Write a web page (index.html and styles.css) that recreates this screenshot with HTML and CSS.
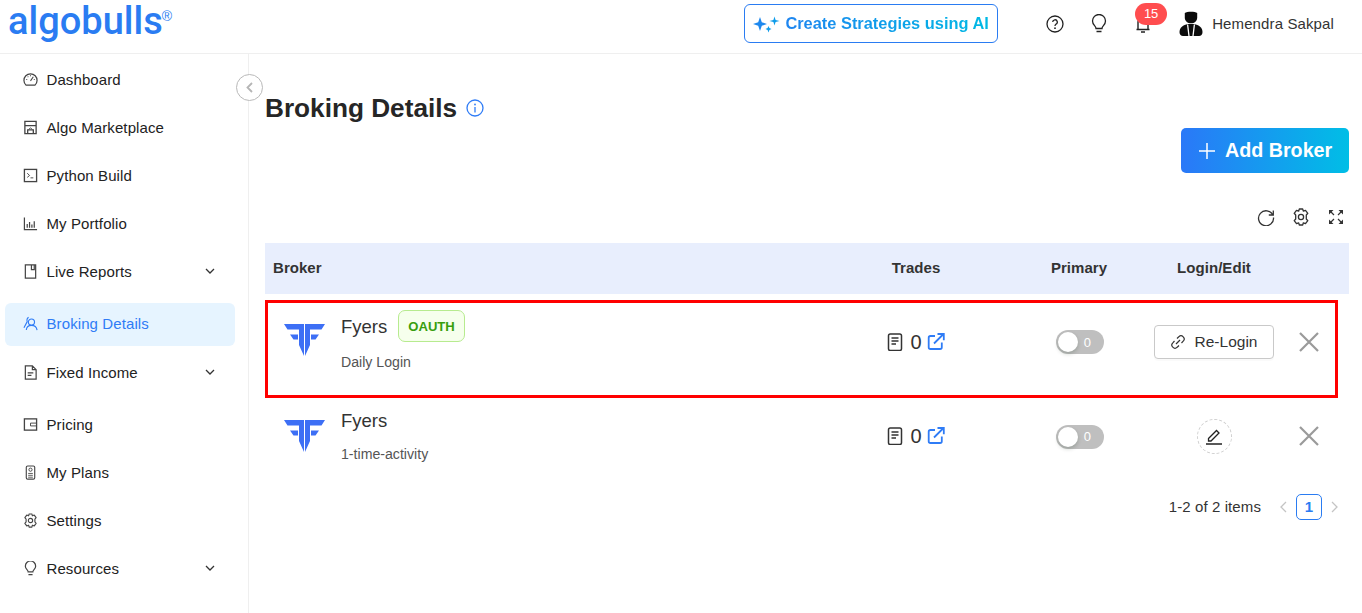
FILE: index.html
```html
<!DOCTYPE html>
<html lang="en">
<head>
<meta charset="utf-8">
<title>Broking Details</title>
<link rel="stylesheet" href="styles.css">
</head>
<body>
<svg class="defs" width="0" height="0" aria-hidden="true">
  <defs>
    <g id="fyers" fill="#3d6ff5">
      <polygon points="0,0 20,0 20,32 15,21 15,5.500 3.500,5.500"/>
      <polygon points="41,0 21,0 21,32 26,21 26,5.500 37.500,5.500"/>
      <polygon points="6,10.500 14,10.500 14,15.500 9.500,15.500"/>
      <polygon points="35,10.500 27,10.500 27,15.500 31.500,15.500"/>
    </g>
    <g id="doc">
      <rect x="1.500" y="1" width="13" height="16.500" rx="1.800" fill="none" stroke="#333" stroke-width="1.500"/>
      <path d="M4.500 5h7M4.500 8h7M4.500 11h4.500" fill="none" stroke="#333" stroke-width="1.300"/>
    </g>
    <g id="ext">
      <path d="M8 3H3.500A1.800 1.800 0 0 0 1.700 4.800V14.200A1.800 1.800 0 0 0 3.500 16H13A1.800 1.800 0 0 0 14.800 14.200V9.500" fill="none" stroke="#2f7cf6" stroke-width="1.800"/>
      <path d="M7 10.500 16.500 1M10.500 1H16.800V7.300" fill="none" stroke="#2f7cf6" stroke-width="1.800"/>
    </g>
    <g id="cross">
      <path d="M1 1 19 19M19 1 1 19" fill="none" stroke="#9a9a9a" stroke-width="2.200"/>
    </g>
  </defs>
</svg>

<header class="topbar">
  <div class="logo">algobulls<sup class="logo-reg">®</sup></div>
  <div class="top-actions">
    <a class="ai-button">
      <svg class="ai-stars" width="27" height="18" viewBox="0 0 27 18"><path d="M7 2 8.800 7.200 14 9 8.800 10.800 7 16 5.200 10.800 0 9 5.200 7.200Z" fill="#1e88ee"/><path d="M21.500 1.500 22.600 4.900 26.500 6 22.600 7.100 21.500 10.500 20.400 7.100 16.500 6 20.400 4.900Z" fill="#0d9cea"/><path d="M15.500 11 16.400 13.100 18.500 14 16.400 14.900 15.500 17.500 14.600 14.900 12.500 14 14.600 13.100Z" fill="#109bea"/></svg>
      <span class="ai-label">Create Strategies using AI</span>
    </a>
    <svg class="top-icon help" width="18" height="18" viewBox="0 0 18 18"><circle cx="9" cy="9" r="8" fill="none" stroke="#222" stroke-width="1.300"/><path d="M6.700 7.100A2.300 2.300 0 1 1 9.900 9.200C9.200 9.600 9 10 9 10.900" fill="none" stroke="#222" stroke-width="1.300"/><circle cx="9" cy="13.200" r=".9" fill="#222"/></svg>
    <svg class="top-icon bulb" width="16" height="20" viewBox="0 0 16 20"><path d="M5 14.500C5 12 1.500 11 1.500 7A6.500 6.500 0 0 1 14.500 7C14.500 11 11 12 11 14.500Z" fill="none" stroke="#222" stroke-width="1.300"/><path d="M5.500 17.500H10.500" stroke="#222" stroke-width="1.500"/></svg>
    <div class="bell-wrap">
      <svg width="16" height="20" viewBox="0 0 16 20"><path d="M3 15V8A5 5 0 0 1 13 8V15M1.500 15.500H14.500M6 18H10" fill="none" stroke="#222" stroke-width="1.400"/></svg>
      <span class="bell-badge">15</span>
    </div>
    <div class="user">
      <svg width="24" height="26" viewBox="0 0 24 26"><path d="M5.800 2C8 .2 16 .2 18.200 2V6.500C18.200 10 15.500 12.300 12 12.300S5.800 10 5.800 6.500Z" fill="#0b0b0b"/><path d="M.5 21C.5 16.500 4 14 9 13H15C20 14 23.500 16.500 23.500 21 23.500 23.500 22 25 20 25H4C2 25 .5 23.500 .5 21Z" fill="#0b0b0b"/><path d="M8.600 13.500 10 25M15.400 13.500 14 25" fill="none" stroke="#fff" stroke-width="1.300"/></svg>
      <span class="user-name">Hemendra Sakpal</span>
    </div>
  </div>
</header>

<div class="shell">
  <nav class="sidebar">
    <a class="nav-item">
      <svg class="nav-icon" viewBox="0 0 16 16"><path d="M3.200 14A7 7 0 1 1 12.800 14Z" fill="none" stroke="#444" stroke-width="1.300"/><path d="M8 9.500 11 5M3.500 8H4.500M5 4.800 5.700 5.500M8 3.500V4.500M12.500 8H11.500" fill="none" stroke="#444" stroke-width="1.100"/></svg>
      <span>Dashboard</span>
    </a>
    <a class="nav-item">
      <svg class="nav-icon" viewBox="0 0 16 16"><path d="M2 1.500H14V14.500H2ZM2 6H14M5 14.500V10.500H11V14.500" fill="none" stroke="#444" stroke-width="1.400"/><path d="M6 10 8 8.500 10 10" fill="none" stroke="#444"/></svg>
      <span>Algo Marketplace</span>
    </a>
    <a class="nav-item">
      <svg class="nav-icon" viewBox="0 0 16 16"><rect x="1.500" y="1.500" width="13" height="13" fill="none" stroke="#444" stroke-width="1.400"/><path d="M4.500 5.500 7 8 4.500 10M8 10.500H11" fill="none" stroke="#444"/></svg>
      <span>Python Build</span>
    </a>
    <a class="nav-item">
      <svg class="nav-icon" viewBox="0 0 16 16"><path d="M1.500 1.500V14.500H15" fill="none" stroke="#444" stroke-width="1.300"/><path d="M4.500 12.500V8.500M7 12.500V6.500M9.500 12.500V9M12 12.500V5.500" fill="none" stroke="#444" stroke-width="1.300"/></svg>
      <span>My Portfolio</span>
    </a>
    <a class="nav-item">
      <svg class="nav-icon" viewBox="0 0 16 16"><path d="M2.500 1H13.500V15H2.500ZM9 1V6H12V1" fill="none" stroke="#444" stroke-width="1.300"/></svg>
      <span>Live Reports</span>
      <svg class="chev" viewBox="0 0 10 6"><path d="M1 1 5 5 9 1" fill="none" stroke="#333" stroke-width="1.300"/></svg>
    </a>
    <a class="nav-item nav-active">
      <svg class="nav-icon" viewBox="0 0 16 16"><circle cx="9" cy="6.500" r="3.300" fill="none" stroke="#2f7cf6" stroke-width="1.200"/><path d="M3.500 15C3.800 11.800 6 10 9 10S14.500 11.800 15 15M6 1.500C4.500 2 3.800 4 4.500 6L1 12.500" fill="none" stroke="#2f7cf6" stroke-width="1.200"/></svg>
      <span>Broking Details</span>
    </a>
    <a class="nav-item nav-after-active">
      <svg class="nav-icon" viewBox="0 0 16 16"><path d="M2.500 1H10L14 5V15H2.500ZM10 1V5H14M5 8.500H11M5 11H9" fill="none" stroke="#444" stroke-width="1.300"/></svg>
      <span>Fixed Income</span>
      <svg class="chev" viewBox="0 0 10 6"><path d="M1 1 5 5 9 1" fill="none" stroke="#333" stroke-width="1.300"/></svg>
    </a>
    <a class="nav-item nav-pricing">
      <svg class="nav-icon" viewBox="0 0 16 16"><rect x="1.500" y="2" width="13" height="12" fill="none" stroke="#444" stroke-width="1.400"/><path d="M14 6.500H8V9.500H14" fill="none" stroke="#444"/></svg>
      <span>Pricing</span>
    </a>
    <a class="nav-item">
      <svg class="nav-icon" viewBox="0 0 16 16"><rect x="3.500" y="1" width="9" height="14" rx="1.500" fill="none" stroke="#444" stroke-width="1.200"/><circle cx="8" cy="5" r="1.700" fill="none" stroke="#444"/><path d="M5.500 9H10.500M5.500 11H10.500M5.500 13H10.500" stroke="#444" stroke-width=".9"/></svg>
      <span>My Plans</span>
    </a>
    <a class="nav-item">
      <svg class="nav-icon" viewBox="0 0 16 16"><path d="M6.500 1H9.500L10 3 12 2.200 14 5 12.700 6.500V9.500L14 11 12 13.800 10 13 9.500 15H6.500L6 13 4 13.800 2 11 3.300 9.500V6.500L2 5 4 2.200 6 3Z" fill="none" stroke="#444" stroke-width="1.200" stroke-linejoin="round"/><circle cx="8" cy="8" r="2.300" fill="none" stroke="#444" stroke-width="1.200"/></svg>
      <span>Settings</span>
    </a>
    <a class="nav-item">
      <svg class="nav-icon" viewBox="0 0 16 16"><path d="M5.500 11.500C5.500 9.500 2.500 8.500 2.500 5.500A5.500 5.500 0 0 1 13.500 5.500C13.500 8.500 10.500 9.500 10.500 11.500ZM5.800 14.500H10.200" fill="none" stroke="#444" stroke-width="1.300"/></svg>
      <span>Resources</span>
      <svg class="chev" viewBox="0 0 10 6"><path d="M1 1 5 5 9 1" fill="none" stroke="#333" stroke-width="1.300"/></svg>
    </a>
    <button class="collapse" aria-label="Collapse">
      <svg width="7" height="11" viewBox="0 0 7 11"><path d="M6 1 1.500 5.500 6 10" fill="none" stroke="#b5b5b5" stroke-width="1.800"/></svg>
    </button>
  </nav>

  <main class="content">
    <div class="title-row">
      <h1 class="page-title">Broking Details</h1>
      <svg width="18" height="18" viewBox="0 0 18 18"><circle cx="9" cy="9" r="8" fill="none" stroke="#2f7cf6" stroke-width="1.300"/><path d="M9 8V13.500" stroke="#2f7cf6" stroke-width="1.300"/><circle cx="9" cy="5.500" r=".9" fill="#2f7cf6"/></svg>
    </div>

    <div class="add-row">
      <button class="add-broker">
        <svg width="16" height="16" viewBox="0 0 16 16"><path d="M8 0V16M0 8H16" stroke="#fff" stroke-width="1.500"/></svg>
        <span>Add Broker</span>
      </button>
    </div>

    <div class="tools">
      <svg width="18" height="18" viewBox="0 0 18 18"><path d="M15.800 7A7.500 7.500 0 1 0 16.500 9.500M16.300 2.500V7H11.800" fill="none" stroke="#333" stroke-width="1.300"/></svg>
      <svg width="18" height="18" viewBox="0 0 18 18"><path d="M7.300 1H10.700L11.300 3.200 13.500 2.300 15.800 5.300 14.300 7V11L15.800 12.700 13.500 15.700 11.300 14.800 10.700 17H7.300L6.700 14.800 4.500 15.700 2.200 12.700 3.700 11V7L2.200 5.300 4.500 2.300 6.700 3.200Z" fill="none" stroke="#333" stroke-width="1.300" stroke-linejoin="round"/><circle cx="9" cy="9" r="2.600" fill="none" stroke="#333" stroke-width="1.300"/></svg>
      <svg width="18" height="18" viewBox="0 0 18 18"><path d="M3 3 7 7M15 3 11 7M3 15 7 11M15 15 11 11" fill="none" stroke="#333" stroke-width="1.200"/><path d="M2 2H6.500L2 6.500ZM16 2H11.500L16 6.500ZM2 16H6.500L2 11.500ZM16 16H11.500L16 11.500Z" fill="#333"/></svg>
    </div>

    <div class="table">
      <div class="row head">
        <div class="cell cell-broker">Broker</div>
        <div class="cell cell-center">Trades</div>
        <div class="cell cell-center">Primary</div>
        <div class="cell cell-center">Login/Edit</div>
        <div class="cell"></div>
      </div>

      <div class="row body-row row-first">
        <div class="cell cell-broker broker-info">
          <svg class="fyers-logo" width="41" height="33" viewBox="0 0 41 33"><use href="#fyers"/></svg>
          <div class="broker-text">
            <div class="broker-title"><span class="broker-name">Fyers</span><span class="oauth">OAUTH</span></div>
            <div class="broker-sub">Daily Login</div>
          </div>
        </div>
        <div class="cell cell-center trades">
          <svg width="16" height="18" viewBox="0 0 16 18"><use href="#doc"/></svg><span class="trade-count">0</span><svg width="18" height="18" viewBox="0 0 18 18"><use href="#ext"/></svg>
        </div>
        <div class="cell cell-center"><div class="switch"><span class="knob"></span><span class="switch-text">0</span></div></div>
        <div class="cell cell-center">
          <button class="relogin">
            <svg width="14" height="14" viewBox="0 0 14 14"><path d="M6 3.500 7.800 1.800A2.800 2.800 0 0 1 12.200 6.200L10.500 8M8 10.500 6.200 12.200A2.800 2.800 0 0 1 1.800 7.800L3.500 6M5 9 9 5" fill="none" stroke="#333" stroke-width="1.200"/></svg>
            <span>Re-Login</span>
          </button>
        </div>
        <div class="cell cell-center cell-close"><svg width="20" height="20" viewBox="0 0 20 20"><use href="#cross"/></svg></div>
      </div>

      <div class="row body-row row-second">
        <div class="cell cell-broker broker-info">
          <svg class="fyers-logo" width="41" height="33" viewBox="0 0 41 33"><use href="#fyers"/></svg>
          <div class="broker-text">
            <div class="broker-title plain"><span class="broker-name">Fyers</span></div>
            <div class="broker-sub">1-time-activity</div>
          </div>
        </div>
        <div class="cell cell-center trades">
          <svg width="16" height="18" viewBox="0 0 16 18"><use href="#doc"/></svg><span class="trade-count">0</span><svg width="18" height="18" viewBox="0 0 18 18"><use href="#ext"/></svg>
        </div>
        <div class="cell cell-center"><div class="switch"><span class="knob"></span><span class="switch-text">0</span></div></div>
        <div class="cell cell-center">
          <div class="edit-circle">
            <svg width="18" height="18" viewBox="0 0 18 18"><path d="M3.500 11.500 11.500 3.500 14 6 6 14H3.500ZM1 17H17" fill="none" stroke="#222" stroke-width="1.300"/></svg>
          </div>
        </div>
        <div class="cell cell-center cell-close"><svg width="20" height="20" viewBox="0 0 20 20"><use href="#cross"/></svg></div>
      </div>
    </div>

    <div class="pager">
      <span class="pager-total">1-2 of 2 items</span>
      <svg class="pager-arrow" width="8" height="12" viewBox="0 0 8 12"><path d="M7 1 2 6 7 11" fill="none" stroke="#c4c4c4" stroke-width="1.300"/></svg>
      <span class="pager-page">1</span>
      <svg class="pager-arrow" width="8" height="12" viewBox="0 0 8 12"><path d="M1 1 6 6 1 11" fill="none" stroke="#c4c4c4" stroke-width="1.300"/></svg>
    </div>
  </main>
</div>
</body>
</html>
```

FILE: styles.css
```css
*, *::before, *::after { box-sizing: border-box; }

html, body { height: 100%; }

body {
  margin: 0;
  background: #fff;
  color: #222;
  font-family: "Liberation Sans", Arial, sans-serif;
  font-size: 15px;
  overflow: hidden;
}

.defs { position: absolute; }

.topbar {
  height: 54px;
  border-bottom: 1px solid #efefef;
  display: flex;
  justify-content: space-between;
  align-items: flex-start;
}

.logo {
  margin: 0 0 0 8px;
  color: #2a7cf2;
  font-family: Roboto, sans-serif;
  font-weight: 500;
  font-size: 38px;
  line-height: 43px;
  letter-spacing: 0;
}

.logo-reg {
  font-size: 14px;
  line-height: 14px;
  font-family: "Liberation Sans", sans-serif;
  font-weight: 400;
  vertical-align: 13px;
  margin-left: -1px;
}

.top-actions {
  display: flex;
  align-items: center;
  height: 47px;
}

.ai-button {
  width: 254px;
  height: 39px;
  border: 1px solid #2a7cf2;
  border-radius: 6px;
  display: flex;
  align-items: center;
  justify-content: center;
  gap: 5px;
}

.ai-label {
  font-weight: 700;
  font-size: 16.400px;
  background: linear-gradient(90deg, #1e85f0, #00b9e4);
  -webkit-background-clip: text;
  background-clip: text;
  color: transparent;
}

.help { margin-left: 48px; }
.bulb { margin-left: 27px; }

.bell-wrap {
  position: relative;
  margin-left: 28px;
  display: flex;
}

.bell-badge {
  position: absolute;
  left: 0;
  top: -11px;
  width: 32px;
  height: 22px;
  border-radius: 11px;
  background: #ff4d4f;
  color: #fff;
  font-size: 13px;
  line-height: 22px;
  text-align: center;
}

.user {
  display: flex;
  align-items: center;
  gap: 9px;
  margin-left: 28px;
  margin-right: 28px;
}

.user-name { font-size: 15px; letter-spacing: .12px; color: #333; }

.shell {
  display: flex;
  height: calc(100% - 54px);
}

.sidebar {
  position: relative;
  flex: 0 0 249px;
  border-right: 1px solid #efefef;
  padding: 2px 13px 0 5px;
}

.nav-item {
  display: flex;
  align-items: center;
  height: 48px;
  padding: 0 0 2px 18px;
  gap: 8.500px;
  color: #222;
  font-size: 15px;
  letter-spacing: .1px;
}

.nav-icon {
  width: 15px;
  height: 15px;
  flex: none;
}

.chev {
  width: 10px;
  height: 6px;
  margin-left: auto;
  margin-right: 20px;
}

.nav-active {
  height: 43px;
  margin-top: 7px;
  background: #e6f4ff;
  border-radius: 6px;
  color: #2f7cf6;
}

.nav-after-active { margin-top: 3px; }
.nav-pricing { margin-top: 4px; }

.collapse {
  position: absolute;
  top: 20px;
  right: -15px;
  width: 27px;
  height: 27px;
  border-radius: 50%;
  border: 1px solid #b9b9b9;
  background: #fff;
  padding: 0;
  display: flex;
  align-items: center;
  justify-content: center;
}

.content {
  flex: 1;
  padding: 0 13px 0 16px;
  min-width: 0;
}

.title-row {
  display: flex;
  align-items: center;
  gap: 9px;
  height: 34px;
  margin-top: 37px;
}

.page-title {
  margin: 0;
  font-size: 26.200px;
  font-weight: 700;
  color: #262626;
}

.add-row {
  display: flex;
  justify-content: flex-end;
  margin-top: 3px;
}

.add-broker {
  display: flex;
  align-items: center;
  gap: 10px;
  height: 45px;
  width: 168px;
  padding: 0 0 0 18px;
  border: 0;
  border-radius: 5px;
  background: linear-gradient(90deg, #2a78f8, #00bee6);
  color: #fff;
  font-family: inherit;
  font-weight: 700;
  font-size: 19.700px;
}

.tools {
  display: flex;
  justify-content: flex-end;
  gap: 17px;
  height: 18px;
  margin-top: 35px;
  padding-right: 4px;
}

.table { margin-top: 17px; }

.row {
  display: grid;
  grid-template-columns: 553px 196px 130px 140px 65px;
}

.head {
  height: 51px;
  padding-bottom: 2px;
  background: #e8eefd;
  font-weight: 700;
  font-size: 15px;
  letter-spacing: .05px;
  color: #333;
  align-items: center;
}

.cell-center { display: flex; justify-content: center; align-items: center; }

.cell-close { padding-right: 15px; }

.head .cell-broker { padding-left: 8px; }

.body-row { position: relative; align-items: start; }

.row-first { height: 104px; }

.row-first::after {
  content: "";
  position: absolute;
  left: 0;
  top: 6px;
  right: 11px;
  height: 98px;
  border: 3px solid #f00;
  pointer-events: none;
}

.row-second { height: 76px; }

.row-first .cell-center { height: 96px; }
.row-second .cell-center { height: 76px; }

.broker-info {
  display: flex;
  align-items: flex-start;
  padding-left: 19px;
  gap: 16px;
}

.row-first .broker-info { padding-top: 16px; }
.row-second .broker-info { padding-top: 12px; }

.fyers-logo { flex: none; margin-top: 14px; }
.row-second .fyers-logo { margin-top: 10px; }

.broker-title {
  display: flex;
  align-items: center;
  gap: 11px;
  height: 32px;
}

.broker-title.plain { height: 20px; }

.broker-name { font-size: 18.500px; color: #333; padding-top: 1px; }

.oauth {
  display: block;
  height: 32px;
  padding: 0 9px;
  line-height: 31px;
  background: #f6ffed;
  border: 1px solid #b7eb8f;
  border-radius: 7px;
  color: #389e0d;
  font-weight: 700;
  font-size: 13.100px;
}

.broker-sub {
  font-size: 14.150px;
  color: #555;
  margin-top: 12px;
}

.row-second .broker-sub { margin-top: 16px; }

.trade-count { font-size: 20px; color: #333; margin: 0 5px 0 7px; }

.switch {
  position: relative;
  left: 1px;
  width: 48px;
  height: 24px;
  border-radius: 12px;
  background: #bfbfbf;
  display: flex;
  align-items: center;
  justify-content: flex-end;
  padding-right: 13px;
}

.row-second .switch { margin-top: 1px; }

.knob {
  position: absolute;
  left: 2px;
  top: 2px;
  width: 20px;
  height: 20px;
  border-radius: 50%;
  background: #fff;
  box-shadow: 0 2px 4px rgba(0,35,11,.2);
}

.switch-text { color: #fff; font-size: 13px; }

.relogin {
  display: flex;
  align-items: center;
  justify-content: center;
  gap: 10px;
  width: 120px;
  height: 34px;
  padding: 0;
  background: #fff;
  border: 1px solid #c9c9c9;
  border-radius: 4px;
  box-shadow: 0 2px 0 rgba(0,0,0,.02);
  font-family: inherit;
  font-size: 15.500px;
  color: #333;
}

.edit-circle {
  width: 35px;
  height: 35px;
  border-radius: 50%;
  border: 1px dashed #cfcfcf;
  display: flex;
  align-items: center;
  justify-content: center;
}

.pager {
  display: flex;
  align-items: center;
  justify-content: flex-end;
  height: 26px;
  margin-top: 20px;
  padding-right: 10px;
}

.pager-total { font-size: 15px; color: #333; margin: 0 18px 2px 0; letter-spacing: .1px; }

.pager-page {
  width: 26px;
  height: 26px;
  margin: 0 9px;
  border: 1px solid #2a7cf2;
  border-radius: 5px;
  color: #2a7cf2;
  font-weight: 700;
  font-size: 15px;
  line-height: 24px;
  text-align: center;
}
```
